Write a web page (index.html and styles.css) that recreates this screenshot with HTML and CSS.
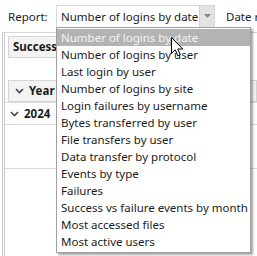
FILE: index.html
```html
<!DOCTYPE html>
<html lang="en">
<head>
  <meta charset="UTF-8" />
  <title>Reports</title>
  <link rel="stylesheet" href="styles.css">
</head>
<body>
  <div class="toolbar">
    <span class="label report">Report:</span>
    <div class="combo">
      <span class="combo-text">Number of logins by date</span>
      <span class="combo-btn">
        <svg width="7" height="4" viewBox="0 0 7 4"><path d="M0 0H7L3.5 4Z" fill="#8a8a8a"/></svg>
      </span>
    </div>
    <span class="label date">Date range:</span>
  </div>

  <div class="content">
    <div class="panel">
      <div class="tab">Success</div>
      <div class="group-head">
        <svg class="chev" width="9" height="6" viewBox="0 0 9 6"><path d="M1 1L4.5 4.5L8 1" fill="none" stroke="#444" stroke-width="1.6"/></svg>
        Year
      </div>
      <div class="row">
        <svg class="chev" width="9" height="6" viewBox="0 0 9 6"><path d="M1 1L4.5 4.5L8 1" fill="none" stroke="#444" stroke-width="1.6"/></svg>
        2024
      </div>
      <div class="row empty"></div>
    </div>
  </div>

  <!-- open dropdown of the report combo -->
  <ul class="dropdown">
    <li class="selected">Number of logins by date</li>
    <li>Number of logins by user</li>
    <li>Last login by user</li>
    <li>Number of logins by site</li>
    <li>Login failures by username</li>
    <li>Bytes transferred by user</li>
    <li>File transfers by user</li>
    <li>Data transfer by protocol</li>
    <li>Events by type</li>
    <li>Failures</li>
    <li>Success vs failure events by month</li>
    <li>Most accessed files</li>
    <li>Most active users</li>
  </ul>

  <svg class="cursor" width="13" height="20" viewBox="0 0 13 20">
    <path d="M0.5 0.5V16.5L4.3 12.8L6.8 18.8L9.2 17.8L6.8 12H11.8Z" fill="#fff" stroke="#000" stroke-width="1"/>
  </svg>
</body>
</html>
```

FILE: styles.css
```css
body {
  margin: 0;
  width: 257px;
  height: 256px;
  overflow: hidden;
  background: #fff;
  font-family: "Noto Sans", "Open Sans", sans-serif;
  font-size: 11.5px;
  color: #1b1b1b;
  position: relative;
}

.toolbar {
  display: flex;
  align-items: center;
  height: 32px;
  padding-left: 8px;
  white-space: nowrap;
  overflow: hidden;
}

.label {
  color: #222;
}

.report {
  width: 48px;
  flex-shrink: 0;
}

.combo {
  display: flex;
  flex-shrink: 0;
  align-items: stretch;
  width: 157px;
  height: 21px;
  border: 1px solid #d9d9d9;
  background: #fff;
}

.combo-text {
  flex: 1;
  padding-left: 4px;
  line-height: 21px;
}

.combo-btn {
  width: 14px;
  background: #e3e3e3;
  border-left: 1px solid #d0d0d0;
  display: flex;
  align-items: center;
  justify-content: center;
}

.date {
  margin-left: 11px;
}

.content {
  display: flex;
}

.panel {
  flex: 1;
  height: 224px;
  margin-left: 2px;
  border-left: 3px double #c8c8c8;
  border-top: 1px solid #d6d6d6;
  padding-top: 3px;
}

.tab {
  width: 60px;
  margin-left: 3px;
  height: 20px;
  line-height: 20px;
  padding-left: 4px;
  background: #f3f3f3;
  border: 1px solid #d4d4d4;
  font-weight: bold;
  white-space: nowrap;
  overflow: hidden;
}

.group-head {
  margin-top: 22px;
  margin-left: 3px;
  height: 20px;
  line-height: 20px;
  background: #f3f3f3;
  border: 1px solid #d4d4d4;
  font-weight: bold;
  padding-left: 6px;
  display: flex;
  align-items: center;
  gap: 5px;
}

.row {
  height: 21px;
  border-top: 1px solid #dcdcdc;
  font-weight: bold;
  padding-left: 5px;
  display: flex;
  align-items: center;
  gap: 5px;
}

.row.empty {
  height: 43px;
  border-bottom: 1px solid #dcdcdc;
}

.dropdown {
  position: absolute;
  left: 56px;
  top: 27px;
  width: 193px;
  margin: 0;
  padding: 1px 0 2px;
  list-style: none;
  background: #fff;
  border: 1px solid #a0a0a0;
  box-shadow: 2px 2px 2px rgba(0, 0, 0, 0.35);
}

.dropdown li {
  height: 17px;
  line-height: 17px;
  padding-left: 4px;
  white-space: nowrap;
}

.dropdown li.selected {
  background: #b3b3b3;
  color: #f4f4f4;
}

.cursor {
  position: absolute;
  left: 171px;
  top: 37px;
}
```
